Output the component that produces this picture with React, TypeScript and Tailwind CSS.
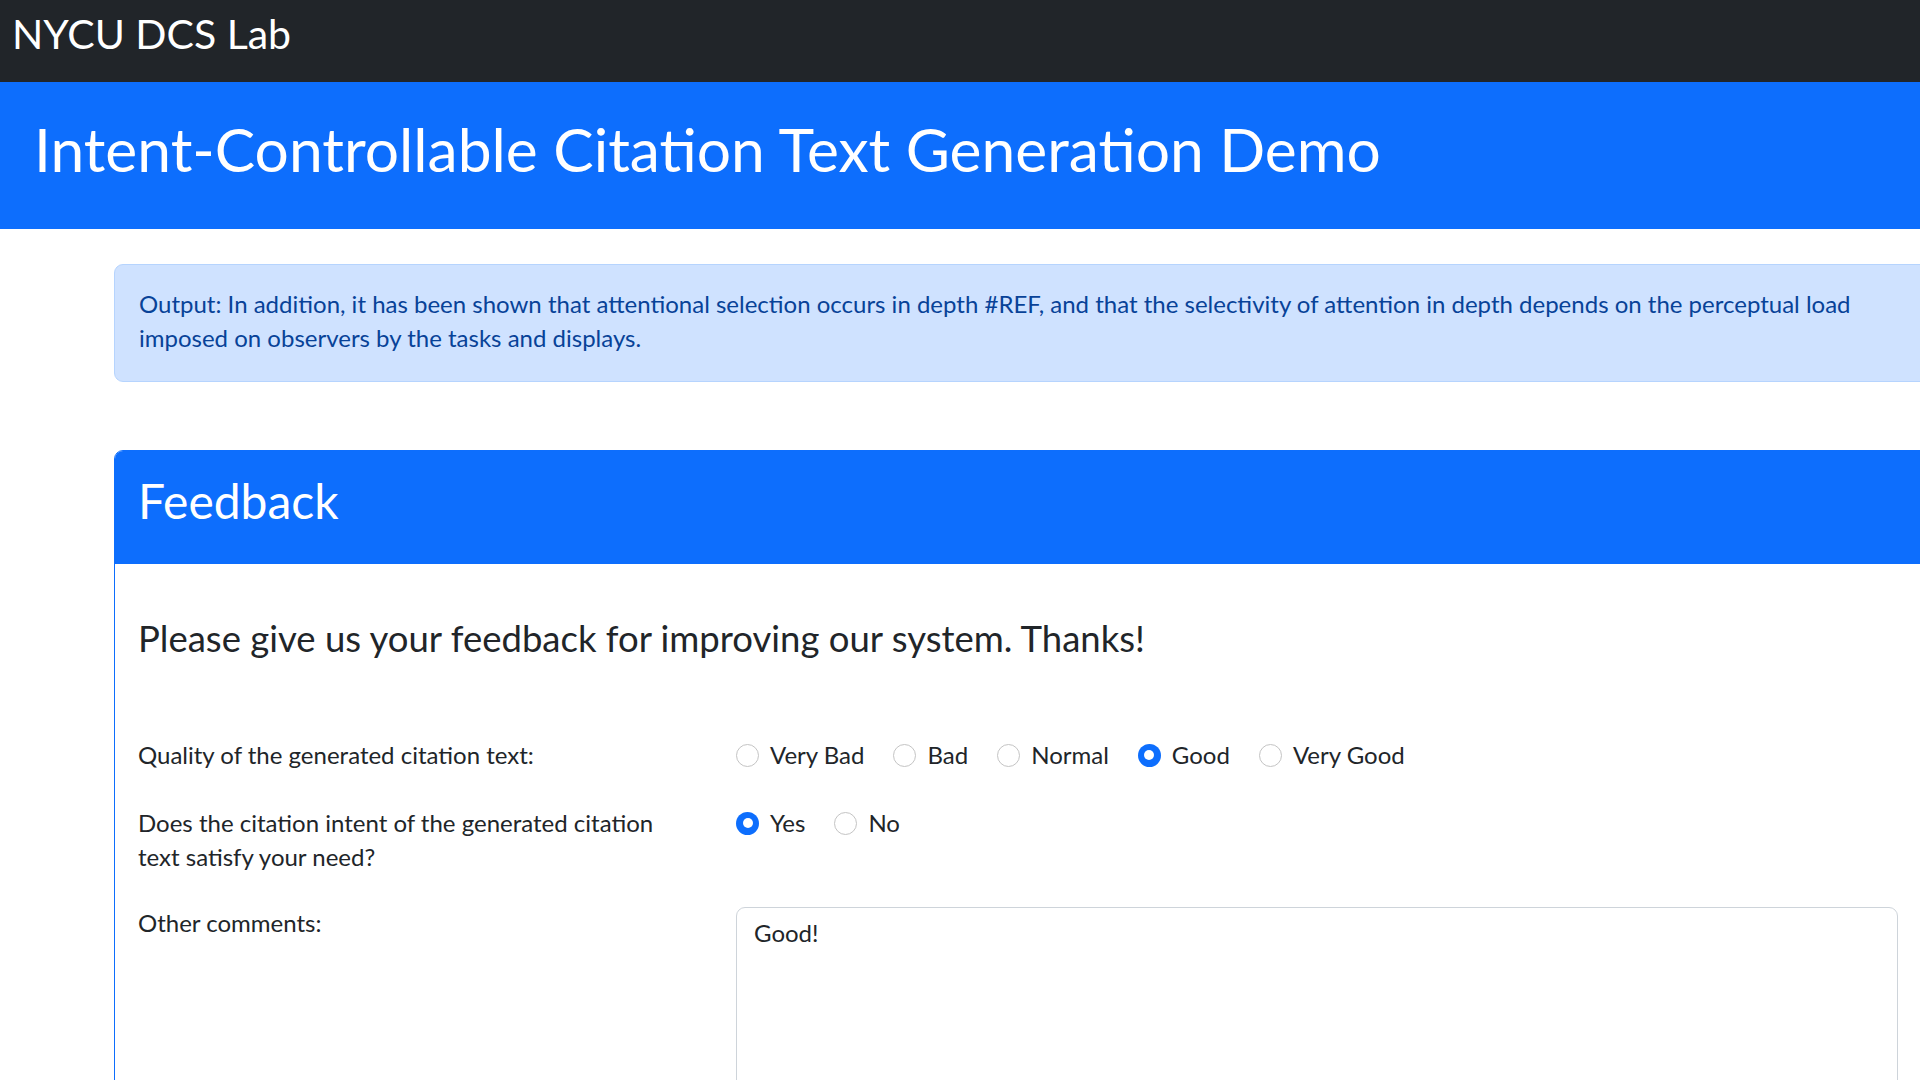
import { useState } from "react";

const FONT = "font-['Lato','Segoe_UI',sans-serif]";

const QUALITY = ["Very Bad", "Bad", "Normal", "Good", "Very Good"];

function Radio({ label, checked, onClick }: { label: string; checked: boolean; onClick: () => void }) {
  return (
    <label className="flex items-center cursor-pointer" onClick={onClick}>
      {checked ? (
        <span className="w-[23px] h-[23px] rounded-full bg-[#0d6efd] flex items-center justify-center">
          <span className="w-[10px] h-[10px] rounded-full bg-white" />
        </span>
      ) : (
        <span className="w-[23px] h-[23px] rounded-full border border-[#c4c4c4] bg-white" />
      )}
      <span className="ml-[11px]">{label}</span>
    </label>
  );
}

export default function App() {
  const [quality, setQuality] = useState("Good");
  const [intent, setIntent] = useState("Yes");
  const [comment, setComment] = useState("Good!");

  return (
    <div className={`w-[1920px] h-[1080px] overflow-hidden bg-white text-[#212529] ${FONT}`}>
      <nav className="h-[82px] bg-[#212529] flex items-center px-[12px] pb-[16px]">
        <span className="text-white text-[41px] leading-none">NYCU DCS Lab</span>
      </nav>

      <header className="h-[147px] bg-[#0d6efd] flex items-center px-[34px] pb-[14px]">
        <h1 className="text-white text-[60.5px] leading-tight">
          Intent-Controllable Citation Text Generation Demo
        </h1>
      </header>

      <main className="pl-[114px] pt-[35px]">
        <div className="w-[1840px]">
          <div className="rounded-[9px] border border-[#b6d4fe] bg-[#cfe2ff] text-[#084298] px-[24px] pt-[22px] pb-[26px] text-[24px] leading-[34px]">
            Output: In addition, it has been shown that attentional selection occurs in depth #REF, and
            that the selectivity of attention in depth depends on the perceptual load imposed on
            observers by the tasks and displays.
          </div>

          <div className="mt-[68px] border border-[#0d6efd] rounded-[9px]">
            <div className="h-[113px] bg-[#0d6efd] rounded-t-[8px] px-[23px] pb-[14px] flex items-center">
              <h2 className="text-white text-[48px] leading-tight">Feedback</h2>
            </div>

            <div className="px-[23px] pt-[53px] text-[24px] leading-[34px]">
              <h3 className="text-[36.5px] leading-[42px]">
                Please give us your feedback for improving our system. Thanks!
              </h3>

              <div className="mt-[79px] flex">
                <div className="w-[598px] pr-[58px]">Quality of the generated citation text:</div>
                <div className="flex items-center gap-[29px] h-[34px]">
                  {QUALITY.map((q) => (
                    <Radio key={q} label={q} checked={quality === q} onClick={() => setQuality(q)} />
                  ))}
                </div>
              </div>

              <div className="mt-[34px] flex">
                <div className="w-[598px] pr-[58px]">
                  Does the citation intent of the generated citation text satisfy your need?
                </div>
                <div className="flex items-center gap-[29px] h-[34px]">
                  {["Yes", "No"].map((v) => (
                    <Radio key={v} label={v} checked={intent === v} onClick={() => setIntent(v)} />
                  ))}
                </div>
              </div>

              <div className="mt-[32px] flex">
                <div className="w-[598px] pr-[58px]">Other comments:</div>
                <textarea
                  value={comment}
                  onChange={(e) => setComment(e.target.value)}
                  className="w-[1162px] h-[300px] mt-[1px] border border-[#ced4da] rounded-[9px] px-[17px] pt-[8px] pb-[9px] text-[24px] leading-[34px] text-[#212529] resize-none outline-none"
                />
              </div>
            </div>
          </div>
        </div>
      </main>
    </div>
  );
}
